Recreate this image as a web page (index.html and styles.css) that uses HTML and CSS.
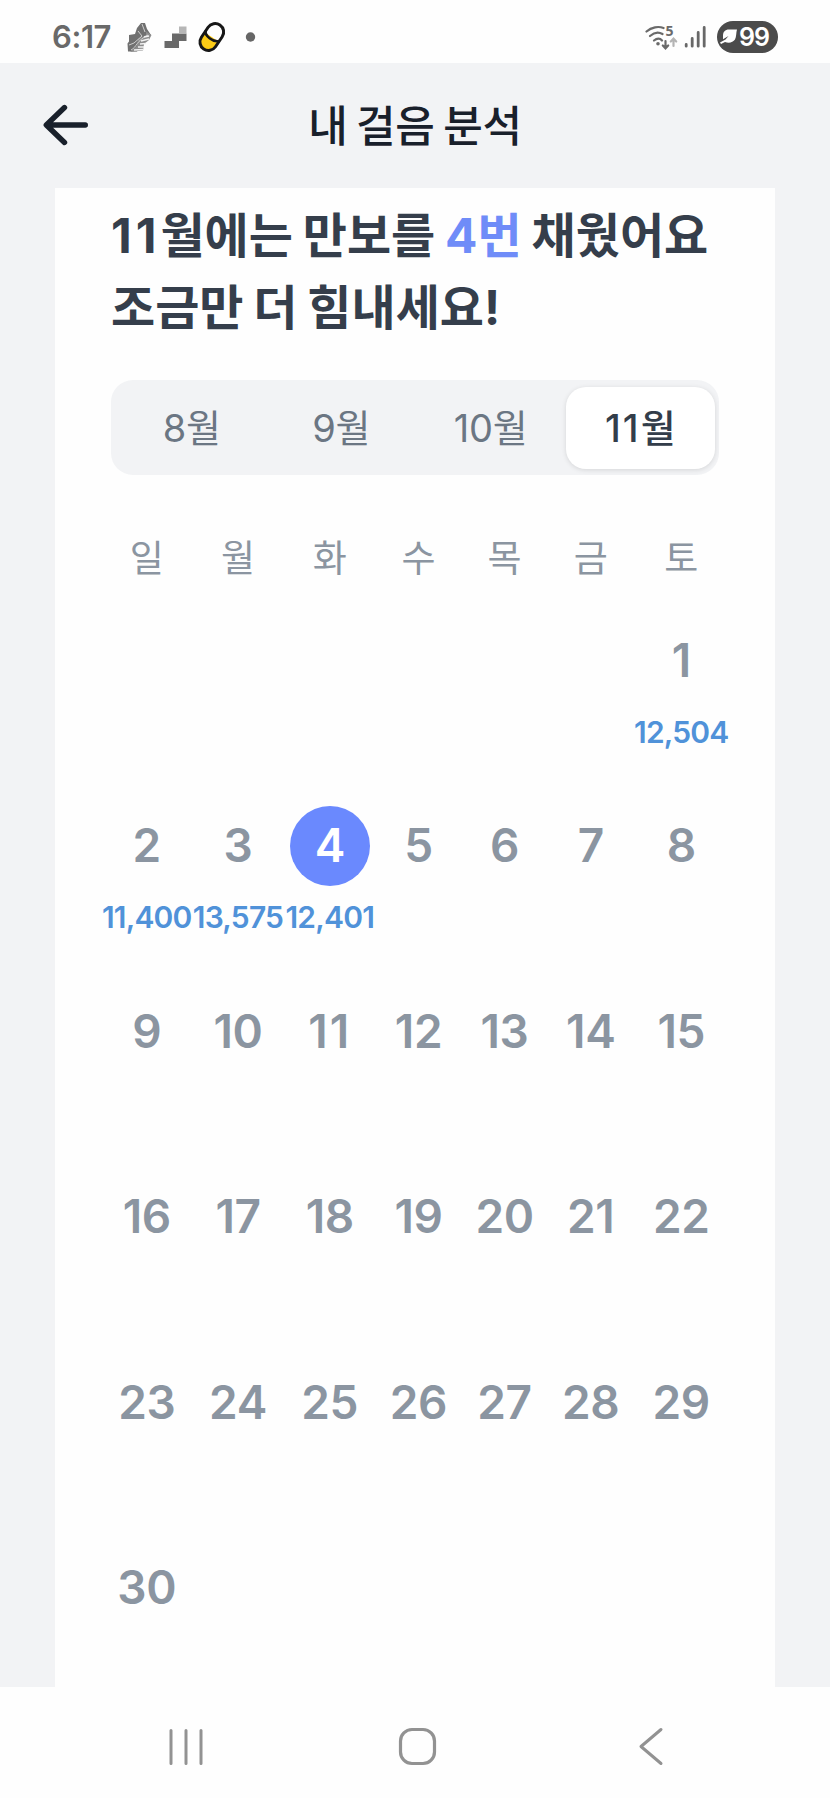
FILE: index.html
```html
<!DOCTYPE html>
<html lang="ko">
<head>
<meta charset="utf-8">
<title>내 걸음 분석</title>
<link rel="stylesheet" href="styles.css">
</head>
<body>
<div class="status">
  <span class="clock">6:17</span>
  <svg class="status-left" width="138" height="40" viewBox="120 16 138 40">
    <path d="M141 23h4l2 6 4 6-3 5-9 4-2 7.500h-9l-.5-8 1.500-2V35l6-1 2-6z" fill="#707070"/>
    <path d="M146 31.500l5.500 3.500-2.500 5-5 4-1 6.500-13 1.500 7-6 1-7 8-4z" fill="#8d8d8d"/>
    <path d="M142 24l3 8M138 31l4 5-8 7-5 2M131 50c6-3 5-9 17-15" stroke="#cfcfcf" stroke-width="1" fill="none"/>
    <path d="M141 41l8-2M140 44l6-.500M138 47l6 0M134 50l9-.500M144 37l5-1" stroke="#f1f1f1" stroke-width="1.300"/>
    <path d="M164.500 41h7.500v-7.500h14.500V41h-7.500v7h-14.500z" fill="#696969"/>
    <path d="M179 26.500h7.500v7H179z" fill="#b6b6b6"/>
    <g transform="rotate(34 211.800 37)">
      <path d="M203.800 37h16v5.500a8 8 0 0 1-16 0z" fill="#fccb16"/>
      <rect x="203.300" y="22.500" width="17" height="29" rx="8.500" fill="none" stroke="#171717" stroke-width="3"/>
      <path d="M203.300 35c1 5 13 6 17 1" fill="none" stroke="#171717" stroke-width="2.600"/>
    </g>
    <circle cx="250.500" cy="37" r="4.700" fill="#666"/>
  </svg>
  <svg class="status-right" width="62" height="30" viewBox="645 22 62 30">
    <g fill="none" stroke="#6a6a6a" stroke-width="2.200" stroke-linecap="round">
      <path d="M646.500 31.500c5-4.500 12-5.500 17-3.500M650 36c4-3.500 9-4 12.500-2M654 40.500c3-2.500 6-2.500 8 0"/>
      <path d="M665.500 41v7M662.800 45.500l2.700 2.800 2.700-2.800"/>
      <path d="M673.500 46v-7M670.800 41.500l2.700-2.800 2.700 2.800" stroke="#b4b4b4"/>
    </g>
    <circle cx="658" cy="43.800" r="1.800" fill="#6a6a6a"/>
    <text class="band" x="665.500" y="36">5</text>
    <g stroke="#686868" stroke-width="2.800" stroke-linecap="round">
      <path d="M686.200 44.500v1.700M692.200 38.500v7.700M698.200 32.500v13.700M704.200 27.500v18.700"/>
    </g>
  </svg>
  <span class="battery">
    <svg width="18" height="18" viewBox="0 0 18 18"><path d="M17 1.500H9C5 1.500 3 4 3 7.500v3.700L8.500 8 5.500 11.500 0 14.500l1 1.500 4-2c4 1.500 8 .5 10-2.500 1.500-2.500 1-7 2-10z" fill="#fff"/></svg>99</span>
</div>
<header class="bar">
  <svg class="back" width="46" height="42" viewBox="0 0 46 42"><path d="M21.500 3.500L3.300 21l18.200 17.500M4 21h38.300" fill="none" stroke="#19202b" stroke-width="5.400" stroke-linecap="round" stroke-linejoin="round"/></svg>
  <h1 class="title">내 걸음 분석</h1>
</header>
<main class="page">
  <section class="card">
    <h2 class="headline"><span class="month">11</span>월에는 만보를 <em>4번</em> 채웠어요<br>조금만 더 힘내세요!</h2>
    <div class="tabs"><span class="tab">8월</span><span class="tab">9월</span><span class="tab">10월</span><span class="tab active"><span class="wide">11</span>월</span></div>
    <div class="weekdays"><span>일</span><span>월</span><span>화</span><span>수</span><span>목</span><span>금</span><span>토</span></div>
    <div class="days">
      <div class="day first"><b>1</b><i>12,504</i></div>
      <div class="day"><b>2</b><i>11,400</i></div>
      <div class="day"><b>3</b><i>13,575</i></div>
      <div class="day today"><b>4</b><i>12,401</i></div>
      <div class="day"><b>5</b></div>
      <div class="day"><b>6</b></div>
      <div class="day"><b>7</b></div>
      <div class="day"><b>8</b></div>
      <div class="day"><b>9</b></div>
      <div class="day"><b>10</b></div>
      <div class="day"><b class="wide">11</b></div>
      <div class="day"><b>12</b></div>
      <div class="day"><b>13</b></div>
      <div class="day"><b>14</b></div>
      <div class="day"><b>15</b></div>
      <div class="day"><b>16</b></div>
      <div class="day"><b>17</b></div>
      <div class="day"><b>18</b></div>
      <div class="day"><b>19</b></div>
      <div class="day"><b>20</b></div>
      <div class="day"><b>21</b></div>
      <div class="day"><b>22</b></div>
      <div class="day"><b>23</b></div>
      <div class="day"><b>24</b></div>
      <div class="day"><b>25</b></div>
      <div class="day"><b>26</b></div>
      <div class="day"><b>27</b></div>
      <div class="day"><b>28</b></div>
      <div class="day"><b>29</b></div>
      <div class="day"><b>30</b></div>
    </div>
  </section>
</main>
<nav class="nav">
  <svg width="36" height="38" viewBox="0 0 36 38"><path d="M2 2.500v33M17 2.500v33M32 2.500v33" stroke="#929292" stroke-width="3" stroke-linecap="round"/></svg>
  <svg width="40" height="40" viewBox="0 0 40 40"><rect x="2.500" y="2.500" width="34" height="34" rx="11.500" fill="none" stroke="#929292" stroke-width="3.200"/></svg>
  <svg width="26" height="40" viewBox="0 0 26 40"><path d="M23 2.500L3 19.500 23 36.500" fill="none" stroke="#929292" stroke-width="3" stroke-linecap="round" stroke-linejoin="round"/></svg>
</nav>
</body>
</html>
```
FILE: styles.css
```css
* { box-sizing: border-box; margin: 0; padding: 0; }
body { width: 830px; height: 1798px; overflow: hidden; background: #fefefe; font-family: "Inter", "Noto Sans CJK KR", sans-serif; display: flex; flex-direction: column; }
.status { height: 63px; display: flex; align-items: flex-start; padding-left: 52px; background: #fefefe; flex: none; }
.clock { font: 600 31px/40px "Inter", sans-serif; letter-spacing: -.4px; color: #696969; padding-top: 17px; width: 68px; white-space: nowrap; }
.status-left { margin-top: 16px; }
.status-right { margin: 22px 0 0 387px; }
.band { font: 700 14px "Noto Sans", sans-serif; fill: #6a6a6a; }
.battery { margin: 21px 0 0 10px; width: 61px; height: 32px; border-radius: 16px; background: #4b4b4b; color: #fff; font: 600 25px/32px "Inter", sans-serif; letter-spacing: -1px; display: flex; align-items: center; gap: 1px; padding-left: 3px; }
.bar { height: 125px; flex: none; background: #f2f3f5; display: flex; position: relative; align-items: center; justify-content: center; }
.back { position: absolute; left: 43px; top: 41px; }
.title { font-size: 43px; line-height: 60px; font-weight: 500; color: #19202b; white-space: nowrap; letter-spacing: -.2px; word-spacing: -2.800px; }
.page { height: 1499px; flex: none; background: #f2f3f5; padding: 0 55px; }
.card { height: 1499px; background: #fefefe; padding-top: 12px; }
.headline { font-size: 48px; line-height: 71.500px; font-weight: 700; color: #353e4b; padding-left: 56px; white-space: nowrap; height: 180px; word-spacing: -1.500px; }
.month { letter-spacing: 4px; }
.headline em { font-style: normal; color: #6f8cf8; }
.tabs { margin-left: 56px; width: 608px; height: 95px; padding: 7px 4px 6px 6px; border-radius: 22px; background: #f2f3f5; display: grid; grid-template-columns: repeat(4, 1fr); grid-template-rows: 82px; }
.tab { font-size: 38px; line-height: 82px; text-align: center; color: #6b7683; letter-spacing: -.2px; }
.active { background: #fff; border-radius: 20px; color: #333d4a; font-weight: 500; box-shadow: 0 1px 5px rgba(0, 0, 0, .12); }
.wide { letter-spacing: 2px; }
.weekdays, .days { display: grid; grid-template-columns: 90.500px 92px 91.500px 86px 86px 86.500px 94.500px; margin-left: 46.500px; width: 627px; text-align: center; }
.weekdays { margin-top: 56px; font: 37px/50px "Noto Sans CJK KR", sans-serif; height: 90px; color: #8b95a1; }
.days { grid-auto-rows: 185.400px; font-family: "Inter", sans-serif; }
.day { display: flex; flex-direction: column; align-items: center; }
.first { grid-column: 7; }
.day b { width: 80px; height: 80px; line-height: 78px; text-align: center; font-size: 46px; font-weight: 600; letter-spacing: -.4px; color: #8b95a1; }
.day .wide { letter-spacing: 2px; }
.today b { border-radius: 50%; background: #6a89fe; color: #fff; }
.day i { font-style: normal; font-size: 30px; font-weight: 600; line-height: 40px; letter-spacing: -.8px; margin-top: 11px; color: #5092d9; }
.nav { flex: 1; display: flex; align-items: flex-start; padding: 41px 0 0 169px; }
.nav svg:nth-child(2) { margin: -1px 0 0 193px; }
.nav svg:nth-child(3) { margin-left: 200px; margin-top: -1px; }
```
